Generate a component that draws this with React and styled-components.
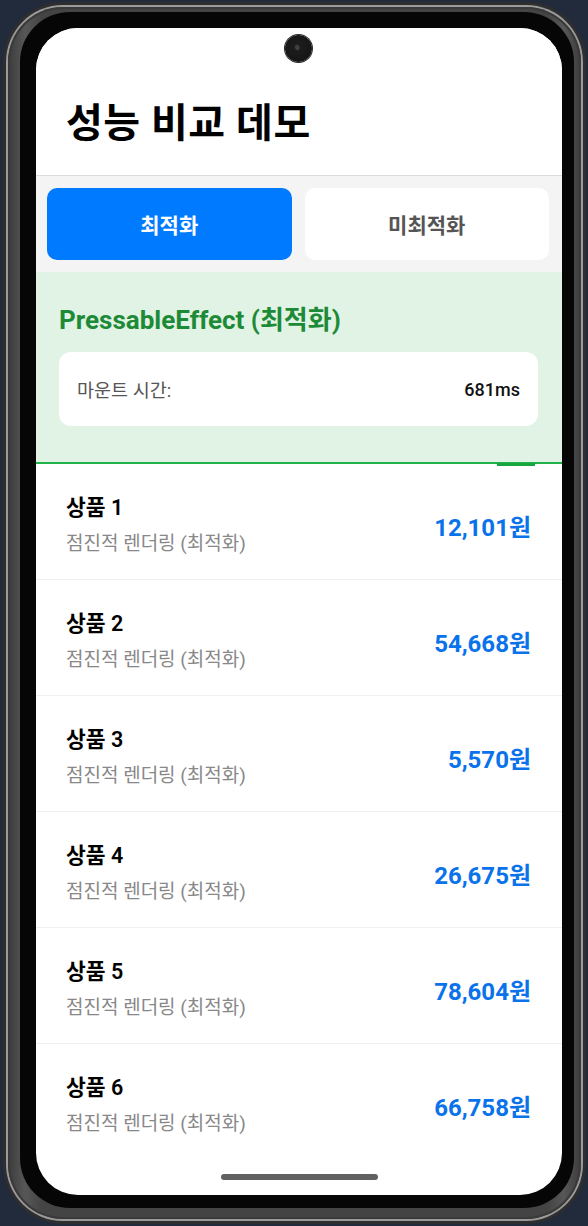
import React, { useState } from "react";
import styled, { createGlobalStyle } from "styled-components";

const GlobalStyle = createGlobalStyle`
  html, body {
    margin: 0;
    padding: 0;
    height: 1226px;
    overflow: hidden;
    background: #222b3c;
  }
  * {
    box-sizing: border-box;
  }
`;

const FONT = `Roboto, "Noto Sans CJK KR", sans-serif`;

// phone body, layer by layer (outer edge -> highlight -> metal -> bezel -> screen)
const Phone = styled.div`
  margin: 2px 2px 2px 3px;
  height: 1222px;
  border-radius: 60px;
  padding: 3px;
  background: #2e2e2e;
  display: flex;
`;

const Highlight = styled.div`
  flex: 1;
  display: flex;
  border-radius: 57px;
  padding: 2px;
  background: #9a9a9a;
`;

const Metal = styled.div`
  flex: 1;
  display: flex;
  border-radius: 55px;
  padding: 5px 7px 11px 12px;
  background: linear-gradient(90deg, #3c3c3c 0%, #575757 3%, #444 6%, #444 94%, #575757 97%, #3c3c3c 100%);
  box-shadow: inset 0 0 0 2px #3a3a3a;
`;

const Bezel = styled.div`
  flex: 1;
  display: flex;
  border-radius: 50px;
  padding: 16px 12px 13px 16px;
  background: #060606;
`;

const Screen = styled.div`
  position: relative;
  flex: 1;
  display: flex;
  flex-direction: column;
  border-radius: 42px;
  overflow: hidden;
  background: #fff;
  font-family: ${FONT};
`;

const Camera = styled.div`
  position: absolute;
  top: 7px;
  left: 50%;
  width: 27px;
  height: 27px;
  margin-left: -14px;
  border-radius: 50%;
  background: radial-gradient(circle at 45% 45%, #3a3a3a 0 2px, #1c1c1c 3px, #161616 70%, #222 100%);
  box-shadow: 0 0 0 1px #2a2a2a;

  &::after {
    content: "";
    position: absolute;
    left: 11px;
    top: 12px;
    width: 3px;
    height: 3px;
    border-radius: 50%;
    background: #444;
  }
`;

const HomeBar = styled.div`
  position: absolute;
  bottom: 15px;
  left: 50%;
  width: 157px;
  height: 6px;
  margin-left: -78px;
  border-radius: 3px;
  background: #616161;
`;

const Header = styled.div`
  padding: 74px 30px 29px;
  border-bottom: 1px solid #dcdcdc;
  background: #fff;
`;

const Title = styled.h1`
  margin: 0;
  font-size: 40px;
  line-height: 44px;
  font-weight: 700;
  letter-spacing: 0.5px;
  color: #000;
`;

const Tabs = styled.div`
  display: flex;
  gap: 13px;
  padding: 12px 13px 12px 11px;
  background: #f4f4f4;
`;

const TabButton = styled.button`
  flex: 1;
  height: 72px;
  border: none;
  border-radius: 10px;
  font-family: ${FONT};
  font-size: 21px;
  font-weight: 700;
  background: ${(p) => (p.$active ? "#007aff" : "#fff")};
  color: ${(p) => (p.$active ? "#fff" : "#555")};
  cursor: pointer;
`;

const ResultPanel = styled.section`
  position: relative;
  padding: 33px 24px 36px 23px;
  background: #e1f3e4;
  border-bottom: 2px solid #1fb349;
`;

const PanelTitle = styled.h2`
  margin: 0 0 17px;
  font-size: 26px;
  line-height: 30px;
  font-weight: 700;
  color: #1d8a37;
`;

const StatCard = styled.div`
  display: flex;
  justify-content: space-between;
  align-items: center;
  height: 74px;
  padding: 0 18px;
  border-radius: 12px;
  background: #fff;
`;

const StatLabel = styled.span`
  font-size: 18.5px;
  color: #555;
`;

const StatValue = styled.span`
  font-size: 18px;
  font-weight: 500;
  color: #111;
`;

const ScrollMark = styled.div`
  position: absolute;
  right: 27px;
  bottom: -4px;
  width: 38px;
  height: 3px;
  background: #16a53f;
`;

const List = styled.div`
  display: flex;
  flex-direction: column;
`;

const Item = styled.div`
  display: flex;
  justify-content: space-between;
  align-items: center;
  height: 116px;
  padding: 31px 31px 24px 30px;
  border-bottom: 1px solid ${(p) => (p.$last ? "transparent" : "#efefef")};
`;

const ItemText = styled.div`
  display: flex;
  flex-direction: column;
  gap: 11px;
`;

const ItemName = styled.div`
  font-size: 21.5px;
  line-height: 26px;
  font-weight: 600;
  color: #000;
`;

const ItemDesc = styled.div`
  font-size: 19px;
  line-height: 24px;
  color: #888;
`;

const Price = styled.div`
  font-size: 24px;
  font-weight: 700;
  color: #0a72ea;
`;

const products = [
  { id: 1, price: 12101 },
  { id: 2, price: 54668 },
  { id: 3, price: 5570 },
  { id: 4, price: 26675 },
  { id: 5, price: 78604 },
  { id: 6, price: 66758 },
];

const App = () => {
  const [mode, setMode] = useState("opt");

  return (
    <>
      <GlobalStyle />
      <Phone>
        <Highlight>
          <Metal>
            <Bezel>
              <Screen>
                <Camera />
                <Header>
                  <Title>성능 비교 데모</Title>
                </Header>
                <Tabs>
                  <TabButton $active={mode === "opt"} onClick={() => setMode("opt")}>
                    최적화
                  </TabButton>
                  <TabButton $active={mode === "raw"} onClick={() => setMode("raw")}>
                    미최적화
                  </TabButton>
                </Tabs>
                <ResultPanel>
                  <PanelTitle>PressableEffect (최적화)</PanelTitle>
                  <StatCard>
                    <StatLabel>마운트 시간:</StatLabel>
                    <StatValue>681ms</StatValue>
                  </StatCard>
                  <ScrollMark />
                </ResultPanel>
                <List>
                  {products.map((p, i) => (
                    <Item key={p.id} $last={i === products.length - 1}>
                      <ItemText>
                        <ItemName>상품 {p.id}</ItemName>
                        <ItemDesc>점진적 렌더링 (최적화)</ItemDesc>
                      </ItemText>
                      <Price>{p.price.toLocaleString("en-US")}원</Price>
                    </Item>
                  ))}
                </List>
                <HomeBar />
              </Screen>
            </Bezel>
          </Metal>
        </Highlight>
      </Phone>
    </>
  );
};

export default App;
